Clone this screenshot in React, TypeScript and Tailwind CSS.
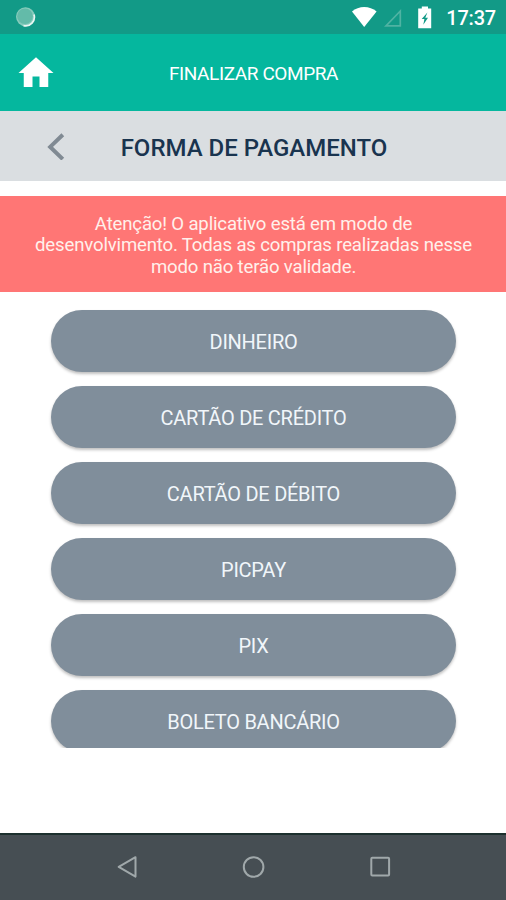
const methods = ['DINHEIRO', 'CARTÃO DE CRÉDITO', 'CARTÃO DE DÉBITO', 'PICPAY', 'PIX', 'BOLETO BANCÁRIO'];

function StatusBar() {
  return (
    <div className="flex h-[34px] items-center bg-[#129a87] pl-4 pr-[10px] text-white">
      <svg className="h-5 w-5" viewBox="0 0 20 20">
        <circle cx="9.5" cy="9.8" r="9.5" fill="#86cbbc" />
        <path d="M18 7.5A8.8 8.8 0 0 1 7.5 18.6" fill="none" stroke="#e9f7f3" strokeWidth="1.7" />
        <circle cx="9" cy="9.3" r="7.8" fill="#63bba9" />
      </svg>
      <svg className="ml-auto h-[34px] w-[94px]" viewBox="352 0 94 34">
        <path d="M352 11.4C358.5 5.4 369.8 5.4 376.6 11.4L364.2 27Z" fill="#fff" />
        <path d="M386 25.8L400.3 11V25.8Z" fill="none" stroke="#4fb3a3" strokeWidth="1.7" />
        <path d="M418.2 8.5H421.8V6.4H428V8.5H431.2V28.2H418.2Z" fill="#fff" />
        <path d="M427.4 12.4L421.7 19.1H424.4L423.3 24.8L428 17.8H425.3Z" fill="#129a87" />
      </svg>
      <span className="pt-[2px] text-[20px] font-medium leading-[22px] tracking-[-0.2px]">17:37</span>
    </div>
  );
}

function AppHeader() {
  return (
    <header className="grid h-[77px] grid-cols-[61px_1fr_60px] items-center bg-[#05b79e] text-white">
      <svg className="ml-[14.5px] h-[42px] w-[42px]" viewBox="0 0 24 24" fill="currentColor">
        <path d="M10 20v-6h4v6h5v-8h3L12 3 2 12h3v8z" />
      </svg>
      <h1 className="whitespace-nowrap pt-[2px] text-center text-[19px] leading-[22px] tracking-[-0.4px]">FINALIZAR COMPRA</h1>
    </header>
  );
}

function SectionTitle() {
  return (
    <div className="grid h-[70px] grid-cols-[80px_1fr_78px] items-center bg-[#dadee1]">
      <svg className="ml-[46px] h-7 w-5" viewBox="0 0 20 28">
        <path d="M16.8 2.7L4.2 14.9L16.8 27.1" fill="none" stroke="#808a93" strokeWidth="4" />
      </svg>
      <h2 className="whitespace-nowrap pt-[4px] text-center text-[24px] font-medium leading-7 text-[#19344f]">FORMA DE PAGAMENTO</h2>
    </div>
  );
}

function NavigationBar() {
  return (
    <nav className="h-[67px] border-t-2 border-[#1d302e] bg-[#464e53]">
      <svg className="h-[65px] w-full" viewBox="0 835 506 65" fill="none" stroke="#a0a8aa" strokeWidth="2">
        <path d="M135.5 857.2L118.7 866.9L135.5 876.6Z" strokeLinejoin="round" />
        <circle cx="253.6" cy="867" r="9.8" />
        <rect x="371.3" y="857.8" width="17.8" height="17.8" rx="1" />
      </svg>
    </nav>
  );
}

export default function App() {
  return (
    <div className="flex h-[900px] w-[506px] flex-col overflow-hidden bg-white font-['Roboto',sans-serif]">
      <StatusBar />
      <AppHeader />
      <SectionTitle />
      <p className="mt-[15px] h-24 bg-[#ff7675] pl-[1px] pt-[17.5px] text-center text-[18.6px] leading-[21.5px] tracking-[-0.17px] text-[#fff0eb]">
        Atenção! O aplicativo está em modo de
        <br />
        desenvolvimento. Todas as compras realizadas nesse
        <br />
        modo não terão validade.
      </p>
      <main className="mt-[14px] flex h-[442px] shrink-0 flex-col gap-[14px] overflow-hidden px-[51px] pt-1">
        {methods.map((method) => (
          <button
            key={method}
            className="flex h-[62px] w-[405px] shrink-0 items-center justify-center rounded-full bg-[#808e9b] pt-[2px] text-[20px] leading-6 tracking-[-0.26px] text-[#f1f6fa] shadow-[0_2px_3px_rgba(0,0,0,0.25)]"
          >
            {method}
          </button>
        ))}
      </main>
      <div className="flex-1" />
      <NavigationBar />
    </div>
  );
}
